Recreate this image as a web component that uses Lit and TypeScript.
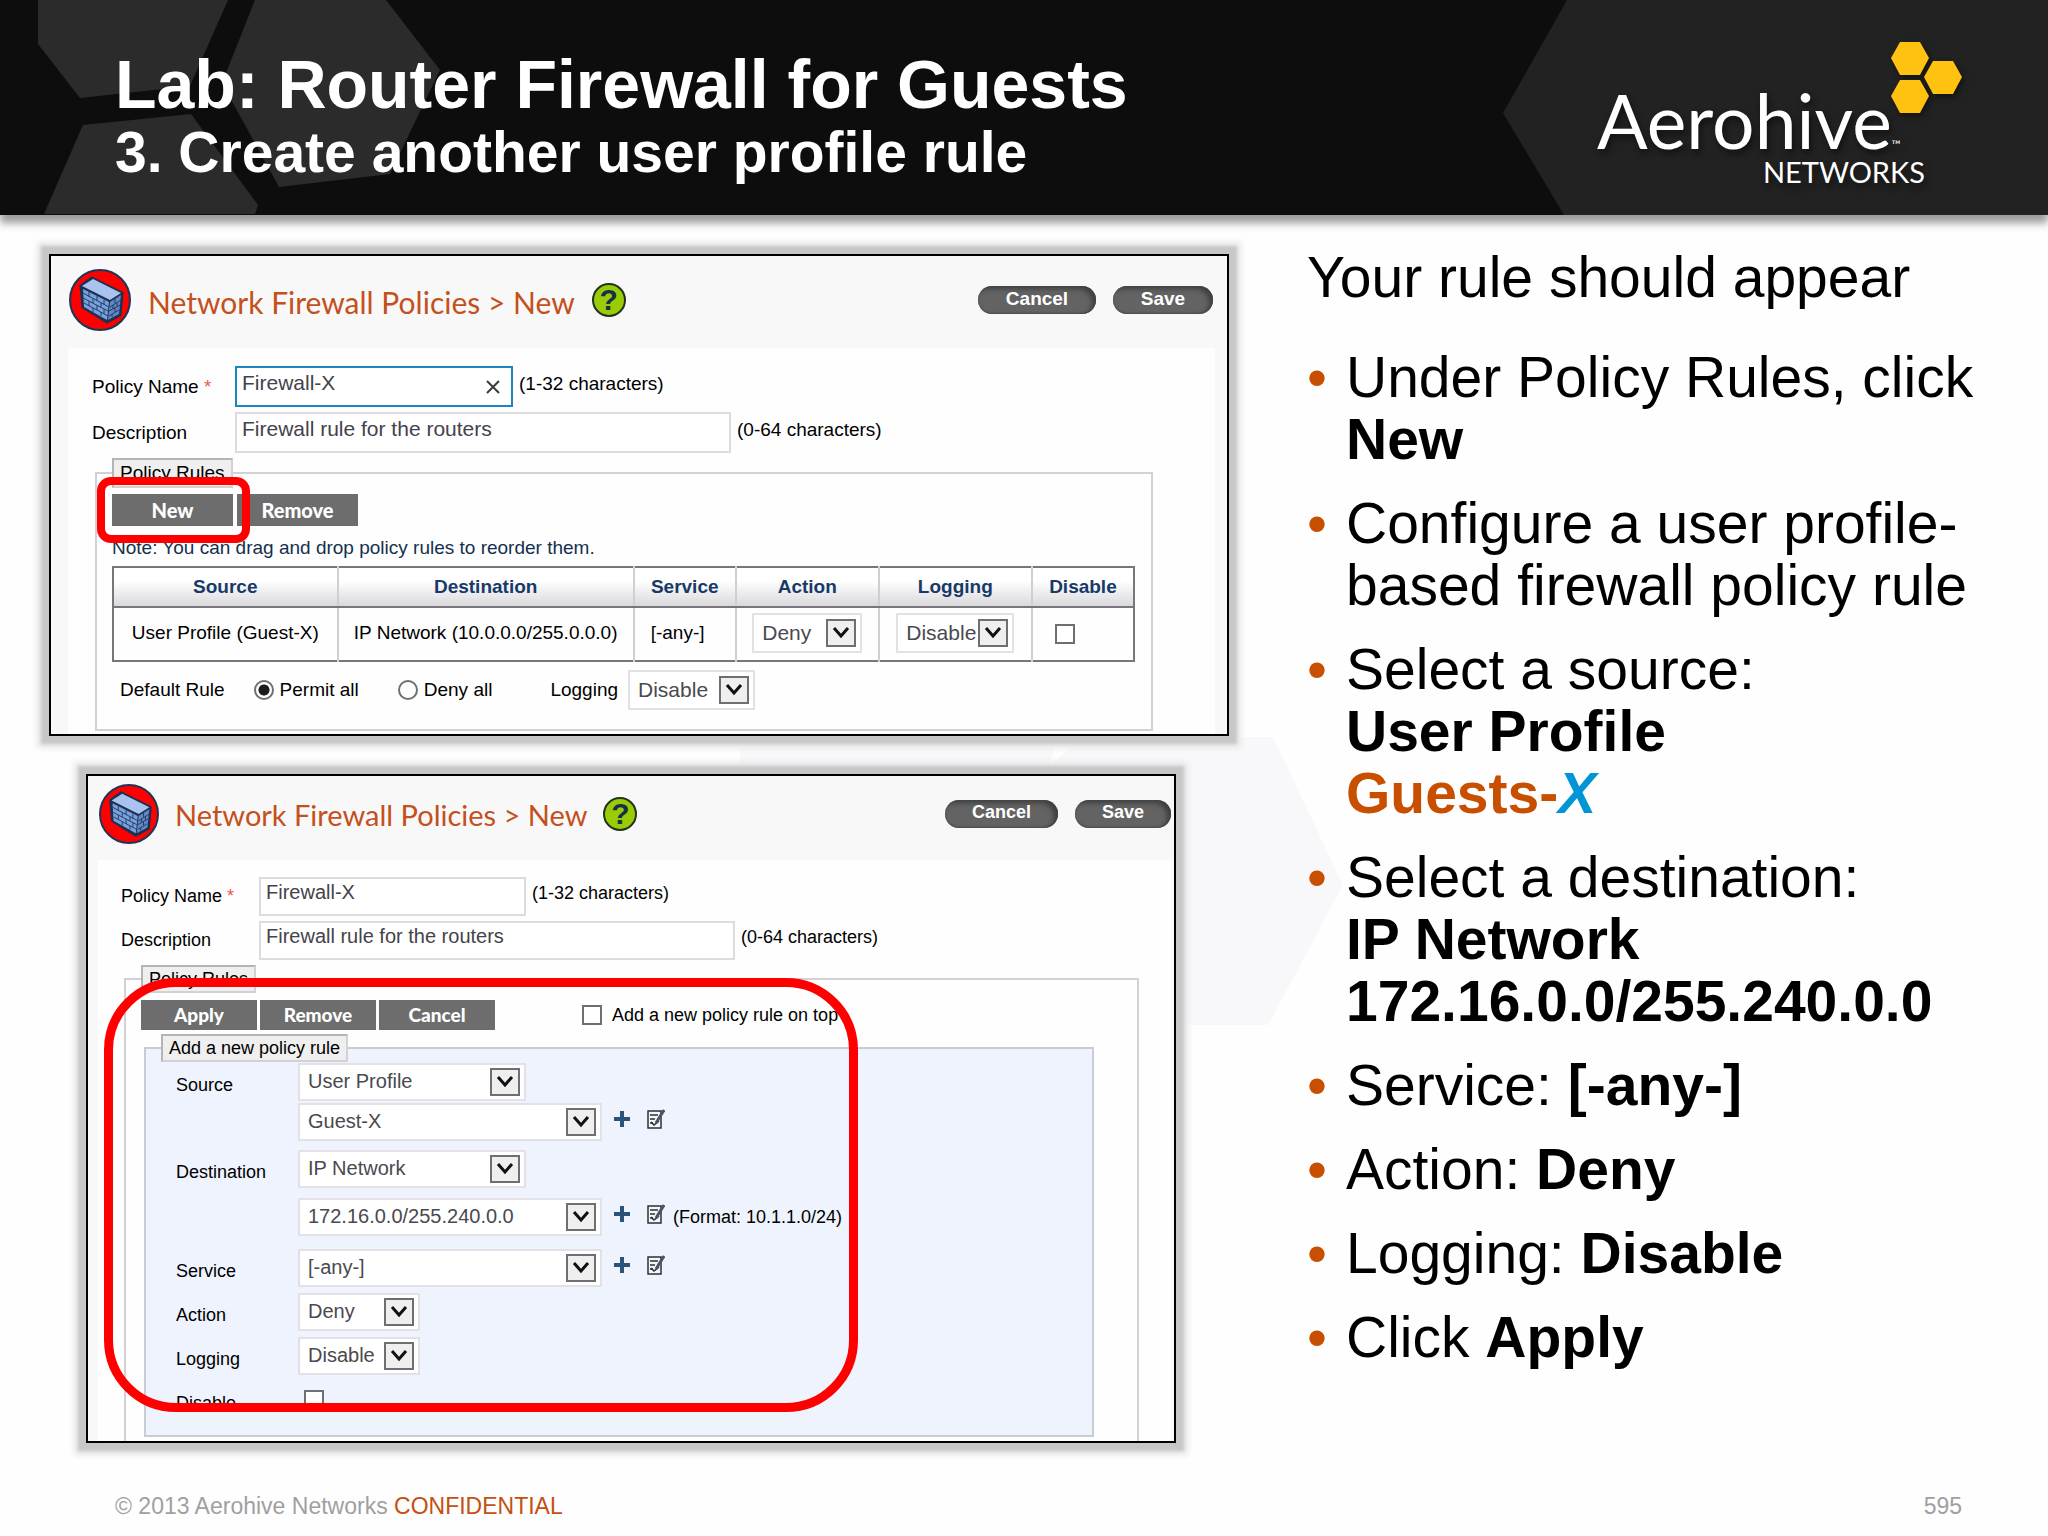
import { LitElement, html, css, svg } from "lit";
import { customElement } from "lit/decorators.js";

const chevron = html`<svg class="chevron" viewBox="0 0 30 28" aria-hidden="true">
  <rect x="1" y="1" width="28" height="26" fill="#f0efef" stroke="#6f6f73" stroke-width="2" />
  <path d="M8 9 L15 17 L22 9" fill="none" stroke="#111" stroke-width="3" />
</svg>`;

const wallIcon = html`<svg class="wall" viewBox="0 0 62 62" aria-hidden="true">
  <circle cx="31" cy="31" r="30" fill="#fe0000" stroke="#1d3557" stroke-width="2" />
  <path d="M12 17 L23 9 L53 24 L51 46 L38 53 L14 38 Z" fill="#1b3154" stroke="#1b3154" stroke-width="3" stroke-linejoin="round" />
  <path d="M13 17 L24 10 L52 24 L41 31 Z" fill="#a9c3ee" />
  <path d="M14 20 L40 33 L38 51 L15 38 Z" fill="#7ba0da" />
  <path d="M41 33 L52 26 L50 45 L39 51 Z" fill="#6287c2" />
  <g fill="none" stroke="#1f3d6b" stroke-width="1">
    <path d="M14 24 L40 38 M14 29 L39 42 M15 34 L39 47" />
    <path d="M41 38 L52 31 M40 42 L51 36 M40 47 L50 41" />
    <path d="M20 23 V28 M28 27 V32 M35 31 V36 M24 30 V34 M32 34 V38 M20 32 V37 M28 36 V41 M35 40 V45 M24 39 V43 M32 43 V47" />
    <path d="M46 30 V34 M44 36 V40 M48 34 V38 M46 39 V43 M43 45 V48" />
  </g>
</svg>`;

const plusIcon = html`<svg viewBox="0 0 18 18" width="18" height="18" aria-hidden="true">
  <path d="M7 1 H11 V7 H17 V11 H11 V17 H7 V11 H1 V7 H7 Z" fill="#2b5278" />
</svg>`;

const editIcon = html`<svg viewBox="0 0 18 20" width="18" height="20" aria-hidden="true">
  <rect x="1" y="2" width="13" height="17" fill="#f4f6f8" stroke="#2c2f36" stroke-width="1.5" />
  <path d="M3 6 H11 M3 10 H8 M3 14 H6" stroke="#2c2f36" stroke-width="1.4" />
  <path d="M4 13 L7 16 L12 12" fill="none" stroke="#2c2f36" stroke-width="1.6" />
  <path d="M17 1 L9 14" stroke="#4a5563" stroke-width="3" />
</svg>`;

const hexPoints = (x: number, y: number) =>
  `${x},${y + 16} ${x + 9},${y} ${x + 29},${y} ${x + 38},${y + 16} ${x + 29},${y + 33} ${x + 9},${y + 33}`;

interface Step {
  lead: string;
  strong?: string[];
  inline?: boolean;
  guest?: boolean;
}

const steps: Step[] = [
  { lead: "Under Policy Rules, click", strong: ["New"], inline: true },
  { lead: "Configure a user profile-based firewall policy rule" },
  { lead: "Select a source:", strong: ["User Profile"], guest: true },
  { lead: "Select a destination:", strong: ["IP Network", "172.16.0.0/255.240.0.0"] },
  { lead: "Service:", strong: ["[-any-]"], inline: true },
  { lead: "Action:", strong: ["Deny"], inline: true },
  { lead: "Logging:", strong: ["Disable"], inline: true },
  { lead: "Click", strong: ["Apply"], inline: true },
];

@customElement("app-root")
export class AppRoot extends LitElement {
  static styles = css`
    :host {
      display: flex;
      flex-direction: column;
      min-height: 100vh;
      position: relative;
      isolation: isolate;
      overflow: hidden;
      background: #fefefe;
      color: #000;
      font-family: "Liberation Sans", Arial, sans-serif;
    }
    * {
      box-sizing: border-box;
    }
    button,
    input,
    select {
      font-family: inherit;
      margin: 0;
    }
    .banner {
      position: relative;
      isolation: isolate;
      display: flex;
      justify-content: space-between;
      min-height: 215px;
      padding: 50px 85px 0 115px;
      background: #0d0d0d;
      color: #fff;
      box-shadow: 0 8px 8px rgba(60, 56, 60, 0.5);
    }
    .facets {
      position: absolute;
      top: 0;
      height: 215px;
      z-index: -1;
    }
    .facets.left {
      left: 0;
      width: 450px;
    }
    .facets.right {
      right: 0;
      width: 546px;
    }
    .titles h1,
    .titles h2 {
      margin: 0;
      font-weight: bold;
    }
    .titles h1 {
      font-size: 68px;
      line-height: 68px;
    }
    .titles h2 {
      font-size: 57px;
      line-height: 68px;
    }
    .brand {
      position: relative;
      width: 366px;
      padding-top: 30px;
      font-family: Lato, "Liberation Sans", sans-serif;
      text-shadow: 2px 4px 6px #111;
    }
    .brand-name {
      display: flex;
      align-items: baseline;
      font-size: 75px;
      line-height: 80px;
      font-weight: 400;
    }
    .brand-name small {
      font-size: 12px;
      line-height: 12px;
    }
    .brand-sub {
      padding-right: 38px;
      text-align: right;
      font-size: 29px;
      line-height: 24px;
    }
    .brand-hexes {
      position: absolute;
      right: 0;
      top: -9px;
      width: 72px;
      height: 73px;
      filter: drop-shadow(2px 3px 3px #111);
    }
    .watermark {
      position: absolute;
      left: 740px;
      top: 737px;
      width: 604px;
      height: 290px;
      z-index: -1;
    }
    .content {
      display: grid;
      grid-template-columns: minmax(0, 118fr) minmax(0, 70fr);
      column-gap: 78px;
      padding: 0 41px 0 49px;
    }
    .shots {
      display: flex;
      flex-direction: column;
      gap: 38px;
      padding-top: 39px;
    }
    .panel {
      --label: 19px;
      --field: 21px;
      --field-h: 41px;
      position: relative;
      border: 2px solid #000;
      background: #f9f8f9;
      font-size: var(--label);
      box-shadow: 0 0 3px 8px #c8c7c8, 0 0 6px 12px #e8e7e8;
    }
    .panel.second {
      --label: 18px;
      --field: 20px;
      --field-h: 39px;
      margin: 0 53px 0 37px;
    }
    .panel-head {
      display: flex;
      align-items: center;
      gap: 17px;
      height: 92px;
      padding: 0 14px 4px 18px;
    }
    .second .panel-head {
      gap: 16px;
      height: 84px;
      padding: 0 3px 8px 11px;
    }
    .wall {
      width: 62px;
      height: 62px;
    }
    .second .wall {
      width: 60px;
      height: 60px;
    }
    .panel-title {
      margin: 0;
      padding-top: 4px;
      font: 400 30px/36px Lato, "Liberation Sans", sans-serif;
      color: #c4501b;
    }
    .second .panel-title {
      font-size: 29px;
      padding-top: 2px;
    }
    .help {
      width: 34px;
      height: 34px;
      padding: 0;
      border: 2px solid #22331b;
      border-radius: 50%;
      background: #99cc06;
      color: #17304a;
      font-size: 30px;
      line-height: 30px;
      font-weight: bold;
    }
    .actions {
      display: flex;
      gap: 17px;
      margin-left: auto;
    }
    .pill {
      width: 118px;
      height: 28px;
      padding: 0 0 3px;
      border: 0;
      border-radius: 14px;
      background: #636363;
      box-shadow: inset -4px 3px 5px #3f3f3f, inset 0 -1px 2px #4a4a4a;
      color: #fff;
      font-size: var(--label);
      line-height: 25px;
      font-weight: bold;
    }
    .pill.save {
      width: 100px;
    }
    .second .pill {
      width: 113px;
    }
    .second .pill.save {
      width: 96px;
    }
    .panel-body {
      display: flex;
      flex-direction: column;
      gap: 5px;
      margin: 0 12px 0 17px;
      padding: 18px 62px 3px 24px;
      background: #fefefe;
    }
    .second .panel-body {
      margin: 0 2px 0 10px;
      padding: 17px 33px 0 23px;
    }
    .form-row {
      display: grid;
      grid-template-columns: 143px auto 1fr;
      align-items: center;
    }
    .second .form-row {
      grid-template-columns: 138px auto 1fr;
    }
    .required {
      color: #f0554d;
    }
    .text-box {
      display: grid;
      align-items: center;
      width: 278px;
    }
    .text-box.wide {
      width: 496px;
    }
    .second .text-box {
      width: 267px;
    }
    .second .text-box.wide {
      width: 476px;
    }
    .text-box > * {
      grid-area: 1 / 1;
    }
    .text-box input {
      width: 100%;
      height: var(--field-h);
      padding: 0 6px 8px 5px;
      border: 2px solid #dcdbe0;
      background: #fff;
      color: #44434b;
      font-size: var(--field);
      outline: none;
    }
    .text-box.active input {
      border-color: #1b86bf;
    }
    .clear {
      justify-self: end;
      width: 18px;
      height: 18px;
      margin-right: 11px;
      padding: 0;
      border: 0;
      background: none;
    }
    .clear svg {
      display: block;
    }
    .hint {
      padding: 0 0 6px 6px;
    }
    .rules {
      min-width: 0;
      margin: 0 0 0 3px;
      padding: 6px 16px 19px 15px;
      border: 2px solid #d2d1d5;
    }
    .second .rules {
      padding: 7px 16px 4px 15px;
      border-bottom: 0;
    }
    .legend {
      padding: 0 6px;
      border: 2px solid #b5b4b6;
      border-right-color: #d2d1d5;
      border-bottom-color: #d2d1d5;
      background: #efefef;
      line-height: 26px;
    }
    .second .legend {
      line-height: 24px;
    }
    .bar {
      display: flex;
      align-items: center;
      gap: 4px;
    }
    .second .bar {
      gap: 3px;
    }
    .flat {
      width: 121px;
      height: 32px;
      padding: 0;
      border: 0;
      background: #6e6d6e;
      color: #fff;
      font: 900 20px/32px Lato, "Liberation Sans", sans-serif;
    }
    .second .flat {
      width: 116px;
      height: 30px;
      font-size: 19px;
      line-height: 30px;
    }
    .on-top {
      display: flex;
      align-items: center;
      gap: 10px;
      margin-left: 84px;
    }
    .note {
      margin: 8px 0 4px;
      line-height: 28px;
      color: #14304e;
    }
    .rule-table {
      width: 100%;
      border: 2px solid #77767b;
      border-collapse: collapse;
      table-layout: fixed;
    }
    .c-source {
      width: 22%;
    }
    .c-dest {
      width: 29%;
    }
    .c-service {
      width: 10%;
    }
    .c-action {
      width: 14%;
    }
    .c-log {
      width: 15%;
    }
    .c-off {
      width: 10%;
    }
    .rule-table th {
      height: 40px;
      padding: 0;
      border-right: 2px solid #cfced3;
      border-bottom: 2px solid #77767b;
      background: linear-gradient(#fff 35%, #d9d8dc);
      color: #173a68;
    }
    .rule-table td {
      height: 54px;
      padding: 0 0 2px;
      border-right: 2px solid #cfced3;
      text-align: center;
      white-space: nowrap;
    }
    .rule-table td.start {
      padding-left: 16px;
      text-align: left;
    }
    .rule-table td.tick {
      padding-left: 22px;
    }
    .rule-table th:last-child,
    .rule-table td:last-child {
      border-right-color: #77767b;
    }
    .pick {
      display: inline-grid;
      align-items: center;
      width: 110px;
      vertical-align: middle;
    }
    .pick > * {
      grid-area: 1 / 1;
    }
    .pick select {
      appearance: none;
      width: 100%;
      height: 40px;
      padding: 0 0 2px 8px;
      border: 2px solid #e2e1e5;
      border-radius: 0;
      background: #fff;
      color: #4a494f;
      font-size: var(--field);
    }
    .second .pick select {
      height: 38px;
    }
    .chevron {
      justify-self: end;
      width: 30px;
      height: 28px;
      margin-right: 6px;
      pointer-events: none;
    }
    .pick.w118 {
      width: 118px;
    }
    .pick.w122 {
      width: 122px;
    }
    .pick.w127 {
      width: 127px;
    }
    .pick.w228 {
      width: 228px;
    }
    .pick.w304 {
      width: 304px;
    }
    .check,
    .radio {
      appearance: none;
      flex: none;
      width: 20px;
      height: 20px;
      border: 2px solid #6f6f73;
      background: #fff;
      vertical-align: middle;
    }
    .radio {
      border-radius: 50%;
    }
    .radio:checked {
      background: radial-gradient(circle, #1c1c1c 5px, #fff 6px);
    }
    .defaults {
      display: flex;
      align-items: center;
      margin-top: 8px;
      padding-left: 8px;
    }
    .choice {
      display: flex;
      align-items: center;
      gap: 6px;
    }
    .choice.permit {
      margin-left: 29px;
    }
    .choice.deny {
      margin-left: 39px;
    }
    .log-label {
      margin: 0 10px 0 58px;
    }
    .new-rule {
      min-width: 0;
      margin: 4px 27px 0 3px;
      padding: 1px 15px 16px;
      border: 2px solid #c9cbd5;
      background: #eef3fd;
    }
    .rule-rows {
      display: flex;
      flex-direction: column;
      gap: 6px;
      padding-left: 15px;
    }
    .rule-row {
      display: grid;
      grid-template-columns: 122px auto 1fr;
      align-items: center;
      height: 38px;
    }
    .rule-row > label:first-child {
      padding-top: 6px;
    }
    .rule-row > .pick,
    .rule-row > .check {
      grid-column: 2;
    }
    .pair {
      display: flex;
      flex-direction: column;
      gap: 2px;
    }
    .pair.loose {
      gap: 10px;
      padding: 3px 0 7px;
    }
    .rule-row .check {
      margin-left: 6px;
    }
    .tools {
      display: flex;
      align-items: center;
      gap: 16px;
      padding-left: 11px;
    }
    .tools button {
      display: flex;
      padding: 0 0 6px;
      border: 0;
      background: none;
    }
    .format {
      margin-left: -8px;
    }
    .mark {
      position: absolute;
      border: 8px solid #fe0000;
      border-radius: 14px;
      pointer-events: none;
      left: 46px;
      top: 221px;
      width: 153px;
      height: 66px;
    }
    .mark.big {
      border-width: 9px;
      border-radius: 72px;
      left: 16px;
      top: 202px;
      width: 754px;
      height: 434px;
    }
    .steps {
      padding-top: 31px;
      font-size: 57px;
      line-height: 62px;
    }
    .steps p {
      margin: 0 0 38px;
    }
    .steps ul {
      display: flex;
      flex-direction: column;
      gap: 22px;
      margin: 0;
      padding: 0;
      list-style: none;
    }
    .steps li {
      display: grid;
      grid-template-columns: 39px 1fr;
    }
    .steps li::before {
      content: "•";
      color: #c84e00;
    }
    .steps strong {
      display: block;
    }
    .steps strong.inline {
      display: inline;
    }
    .guest {
      color: #c84e00;
    }
    .guest em {
      color: #0095d5;
    }
    .foot {
      display: flex;
      align-items: center;
      justify-content: space-between;
      height: 60px;
      margin-top: auto;
      padding: 0 86px 0 115px;
      color: #a09fa2;
      font-size: 23px;
    }
    .foot span span {
      color: #c5500f;
    }
  `;

  private pick(id: string, value: string, width = "", name = "") {
    return html`<span class="pick ${width}">
      <select id=${id} aria-label=${name || value}>
        <option>${value}</option>
      </select>
      ${chevron}
    </span>`;
  }

  private head() {
    return html`<div class="panel-head">
      ${wallIcon}
      <h3 class="panel-title">Network Firewall Policies &gt; New</h3>
      <button class="help" type="button">?</button>
      <div class="actions">
        <button class="pill" type="button">Cancel</button>
        <button class="pill save" type="button">Save</button>
      </div>
    </div>`;
  }

  private identity(prefix: string, active: boolean) {
    return html`<div class="form-row">
        <label for="${prefix}-name">Policy Name <span class="required">*</span></label>
        <span class="text-box ${active ? "active" : ""}">
          <input id="${prefix}-name" type="text" .value=${"Firewall-X"} />
          ${active
            ? html`<button class="clear" type="button" aria-label="Clear">
                <svg viewBox="0 0 18 18" width="18" height="18">
                  <path d="M3 3 L15 15 M15 3 L3 15" stroke="#3b3b40" stroke-width="2" />
                </svg>
              </button>`
            : ""}
        </span>
        <span class="hint">(1-32 characters)</span>
      </div>
      <div class="form-row">
        <label for="${prefix}-desc">Description</label>
        <span class="text-box wide">
          <input id="${prefix}-desc" type="text" .value=${"Firewall rule for the routers"} />
        </span>
        <span class="hint">(0-64 characters)</span>
      </div>`;
  }

  private tools(format = "") {
    return html`<span class="tools">
      <button type="button" aria-label="Add">${plusIcon}</button>
      <button type="button" aria-label="Edit">${editIcon}</button>
      ${format ? html`<span class="format">${format}</span>` : ""}
    </span>`;
  }

  private listPanel() {
    return html`<section class="panel">
      ${this.head()}
      <div class="panel-body">
        ${this.identity("list", true)}
        <fieldset class="rules">
          <legend class="legend">Policy Rules</legend>
          <div class="bar">
            <button class="flat" type="button">New</button>
            <button class="flat" type="button">Remove</button>
          </div>
          <p class="note">Note: You can drag and drop policy rules to reorder them.</p>
          <table class="rule-table">
            <colgroup>
              <col class="c-source" />
              <col class="c-dest" />
              <col class="c-service" />
              <col class="c-action" />
              <col class="c-log" />
              <col class="c-off" />
            </colgroup>
            <thead>
              <tr>
                <th>Source</th>
                <th>Destination</th>
                <th>Service</th>
                <th>Action</th>
                <th>Logging</th>
                <th>Disable</th>
              </tr>
            </thead>
            <tbody>
              <tr>
                <td>User Profile (Guest-X)</td>
                <td>IP Network (10.0.0.0/255.0.0.0)</td>
                <td class="start">[-any-]</td>
                <td>${this.pick("row-action", "Deny", "", "Action")}</td>
                <td>${this.pick("row-log", "Disable", "w118", "Logging")}</td>
                <td class="start tick"><input class="check" type="checkbox" aria-label="Disable" /></td>
              </tr>
            </tbody>
          </table>
          <div class="defaults">
            <span>Default Rule</span>
            <label class="choice permit"><input class="radio" type="radio" name="default" checked />Permit all</label>
            <label class="choice deny"><input class="radio" type="radio" name="default" />Deny all</label>
            <label class="log-label" for="default-log">Logging</label>
            ${this.pick("default-log", "Disable", "w127", "Logging")}
          </div>
        </fieldset>
      </div>
      <div class="mark"></div>
    </section>`;
  }

  private editPanel() {
    return html`<section class="panel second">
      ${this.head()}
      <div class="panel-body">
        ${this.identity("edit", false)}
        <fieldset class="rules">
          <legend class="legend">Policy Rules</legend>
          <div class="bar">
            <button class="flat" type="button">Apply</button>
            <button class="flat" type="button">Remove</button>
            <button class="flat" type="button">Cancel</button>
            <label class="on-top"><input class="check" type="checkbox" />Add a new policy rule on top</label>
          </div>
          <fieldset class="new-rule">
            <legend class="legend">Add a new policy rule</legend>
            <div class="rule-rows">
              <div class="pair">
                <div class="rule-row">
                  <label for="source">Source</label>
                  ${this.pick("source", "User Profile", "w228", "Source")}
                </div>
                <div class="rule-row">
                  ${this.pick("source-value", "Guest-X", "w304")} ${this.tools()}
                </div>
              </div>
              <div class="pair loose">
                <div class="rule-row">
                  <label for="dest">Destination</label>
                  ${this.pick("dest", "IP Network", "w228", "Destination")}
                </div>
                <div class="rule-row">
                  ${this.pick("dest-value", "172.16.0.0/255.240.0.0", "w304")} ${this.tools("(Format: 10.1.1.0/24)")}
                </div>
              </div>
              <div class="rule-row">
                <label for="service">Service</label>
                ${this.pick("service", "[-any-]", "w304", "Service")} ${this.tools()}
              </div>
              <div class="rule-row">
                <label for="action">Action</label>
                ${this.pick("action", "Deny", "w122", "Action")}
              </div>
              <div class="rule-row">
                <label for="logging">Logging</label>
                ${this.pick("logging", "Disable", "w122", "Logging")}
              </div>
              <div class="rule-row">
                <label for="disable">Disable</label>
                <input id="disable" class="check" type="checkbox" />
              </div>
            </div>
          </fieldset>
        </fieldset>
      </div>
      <div class="mark big"></div>
    </section>`;
  }

  render() {
    return html`
      <svg class="watermark" viewBox="0 0 604 290" aria-hidden="true">
        <path d="M0 0 H318 L306 40 H0 Z M340 0 H533 L603 148 L528 288 H300 V40 Z" fill="#f8f7fa" />
      </svg>
      <header class="banner">
        <svg class="facets left" viewBox="0 0 450 215" aria-hidden="true">
          <g fill="#2b2b2b">
            <path d="M38 0 H228 L190 86 L80 98 L38 44 Z" />
            <path d="M255 0 H386 L440 70 L390 174 L279 187 L222 83 Z" />
            <path d="M83 125 L191 114 L258 205 L255 214 H44 Z" />
          </g>
        </svg>
        <svg class="facets right" viewBox="0 0 546 215" aria-hidden="true">
          <path d="M65 0 L1 113 L62 215 H546 V0 Z" fill="#232223" />
        </svg>
        <div class="titles">
          <h1>Lab: Router Firewall for Guests</h1>
          <h2>3. Create another user profile rule</h2>
        </div>
        <div class="brand">
          <div class="brand-name">Aerohive<small>™</small></div>
          <div class="brand-sub">NETWORKS</div>
          <svg class="brand-hexes" viewBox="0 0 72 73" aria-hidden="true">
            ${[[0, 1], [33, 20], [0, 39]].map(
              ([x, y]) => svg`<polygon points=${hexPoints(x, y)} fill="#ffc211" />`
            )}
          </svg>
        </div>
      </header>
      <main class="content">
        <div class="shots">${this.listPanel()} ${this.editPanel()}</div>
        <div class="steps">
          <p>Your rule should appear</p>
          <ul>
            ${steps.map(
              (s) => html`<li>
                <div>
                  ${s.lead}
                  ${(s.strong ?? []).map((t) => html`<strong class=${s.inline ? "inline" : ""}>${t}</strong>`)}
                  ${s.guest ? html`<strong class="guest">Guests-<em>X</em></strong>` : ""}
                </div>
              </li>`
            )}
          </ul>
        </div>
      </main>
      <footer class="foot">
        <span>© 2013 Aerohive Networks <span>CONFIDENTIAL</span></span>
        <span>595</span>
      </footer>
    `;
  }
}
